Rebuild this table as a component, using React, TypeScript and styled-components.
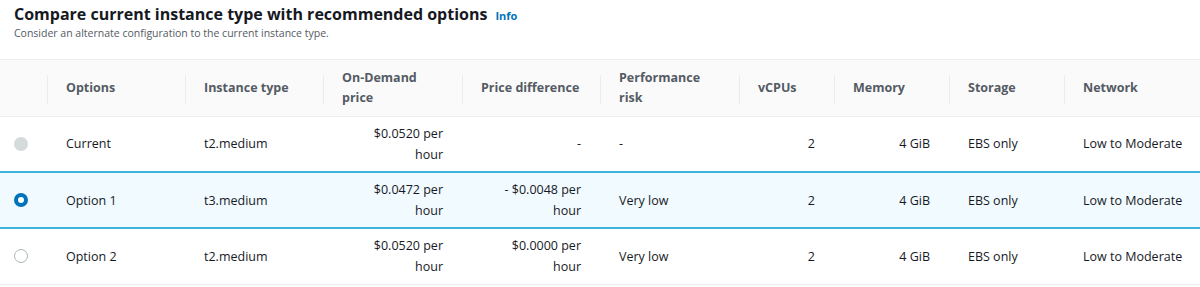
import styled, { createGlobalStyle } from 'styled-components';

const GlobalStyle = createGlobalStyle`
  body {
    margin: 0;
    background: #ffffff;
    font-family: "Open Sans", "Liberation Sans", sans-serif;
    color: #16191f;
  }
`;

const Panel = styled.div`
  width: 1200px;
  display: flex;
  flex-direction: column;
`;

const Heading = styled.div`
  display: flex;
  flex-direction: column;
  padding: 3px 0 0 14px;
  height: 56px;
  border-bottom: 1px solid #eaeded;
`;

const TitleRow = styled.div`
  display: flex;
  align-items: baseline;
  gap: 8px;
`;

const Title = styled.h2`
  margin: 0;
  font-size: 16px;
  line-height: 22px;
  font-weight: 700;
  color: #16191f;
`;

const InfoLink = styled.a`
  font-size: 11px;
  font-weight: 700;
  color: #0073bb;
  text-decoration: none;
`;

const Subtitle = styled.p`
  margin: 0;
  font-size: 10.5px;
  line-height: 17px;
  color: #545b64;
`;

const Table = styled.table`
  width: 1200px;
  border-collapse: collapse;
  table-layout: fixed;
`;

const HeadRow = styled.tr`
  background: #fafafa;
  height: 56px;
`;

const HeadCell = styled.th`
  position: relative;
  text-align: left;
  vertical-align: middle;
  padding: 0 8px 0 19px;
  font-size: 12.5px;
  line-height: 20px;
  font-weight: 700;
  color: #545b64;
  white-space: nowrap;

  &:not(:first-child)::before {
    content: '';
    position: absolute;
    left: 0;
    top: 15px;
    bottom: 12px;
    width: 1px;
    background: #eaeded;
  }
`;

const Row = styled.tr<{ $selected?: boolean }>`
  height: 56px;
  background: ${(p) => (p.$selected ? '#f1faff' : '#ffffff')};
  border-top: ${(p) => (p.$selected ? '2px solid #3db3d8' : '1px solid #eaeded')};
  border-bottom: ${(p) => (p.$selected ? '2px solid #3db3d8' : '1px solid #eaeded')};
`;

const Cell = styled.td<{ $align?: 'left' | 'right'; $nowrap?: boolean }>`
  text-align: ${(p) => p.$align || 'left'};
  vertical-align: middle;
  padding: 0 19px 0 ${(p) => (p.$align === 'right' ? '36px' : '19px')};
  font-size: 12.5px;
  line-height: 21px;
  color: #16191f;
  white-space: ${(p) => (p.$nowrap ? 'nowrap' : 'normal')};
`;

const RadioCell = styled.td`
  padding: 0 0 0 14px;
  vertical-align: middle;
`;

const Radio = styled.span<{ $state: 'disabled' | 'checked' | 'empty' }>`
  display: block;
  box-sizing: border-box;
  width: 14px;
  height: 14px;
  border-radius: 50%;
  ${(p) =>
    p.$state === 'disabled'
      ? 'background: #d5dbdb; border: none;'
      : p.$state === 'checked'
      ? 'background: #ffffff; border: 4px solid #0073bb;'
      : 'background: #ffffff; border: 1px solid #aab7b8;'}
`;

const widths = [47, 138, 138, 139, 138, 139, 95, 115, 115, 136];

const headers = [
  '',
  'Options',
  'Instance type',
  'On-Demand\nprice',
  'Price difference',
  'Performance\nrisk',
  'vCPUs',
  'Memory',
  'Storage',
  'Network',
];

interface Option {
  state: 'disabled' | 'checked' | 'empty';
  name: string;
  type: string;
  price: string;
  diff: string;
  risk: string;
  vcpus: string;
  memory: string;
  storage: string;
  network: string;
}

const rows: Option[] = [
  { state: 'disabled', name: 'Current', type: 't2.medium', price: '$0.0520 per hour', diff: '-', risk: '-', vcpus: '2', memory: '4 GiB', storage: 'EBS only', network: 'Low to Moderate' },
  { state: 'checked', name: 'Option 1', type: 't3.medium', price: '$0.0472 per hour', diff: '- $0.0048 per hour', risk: 'Very low', vcpus: '2', memory: '4 GiB', storage: 'EBS only', network: 'Low to Moderate' },
  { state: 'empty', name: 'Option 2', type: 't2.medium', price: '$0.0520 per hour', diff: '$0.0000 per hour', risk: 'Very low', vcpus: '2', memory: '4 GiB', storage: 'EBS only', network: 'Low to Moderate' },
];

const App = (): JSX.Element => {
  return (
    <Panel>
      <GlobalStyle />
      <Heading>
        <TitleRow>
          <Title>Compare current instance type with recommended options</Title>
          <InfoLink href="#">Info</InfoLink>
        </TitleRow>
        <Subtitle>Consider an alternate configuration to the current instance type.</Subtitle>
      </Heading>
      <Table>
        <colgroup>
          {widths.map((w, i) => (
            <col key={i} style={{ width: w }} />
          ))}
        </colgroup>
        <thead>
          <HeadRow>
            {headers.map((h, i) => (
              <HeadCell key={i}>
                {h.split('\n').map((line, j) => (
                  <span key={j}>
                    {j > 0 && <br />}
                    {line}
                  </span>
                ))}
              </HeadCell>
            ))}
          </HeadRow>
        </thead>
        <tbody>
          {rows.map((r) => (
            <Row key={r.name} $selected={r.state === 'checked'}>
              <RadioCell>
                <Radio $state={r.state} />
              </RadioCell>
              <Cell>{r.name}</Cell>
              <Cell>{r.type}</Cell>
              <Cell $align="right">{r.price}</Cell>
              <Cell $align="right">{r.diff}</Cell>
              <Cell>{r.risk}</Cell>
              <Cell $align="right">{r.vcpus}</Cell>
              <Cell $align="right">{r.memory}</Cell>
              <Cell $nowrap>{r.storage}</Cell>
              <Cell $nowrap>{r.network}</Cell>
            </Row>
          ))}
        </tbody>
      </Table>
    </Panel>
  );
};

export default App;
